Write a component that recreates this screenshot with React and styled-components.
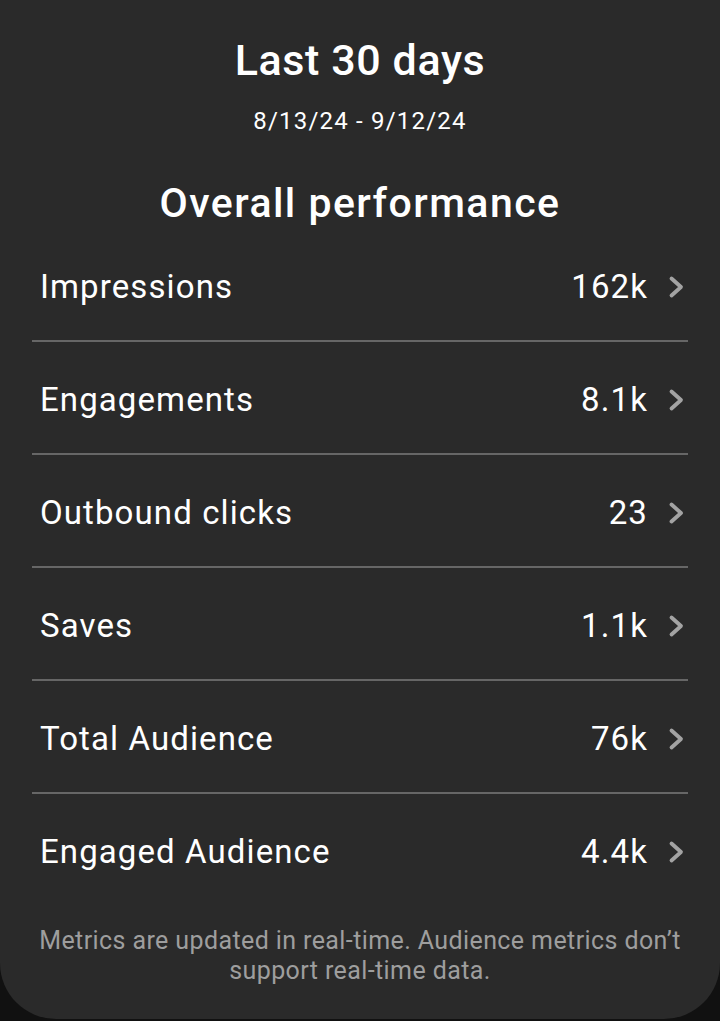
import React from "react";
import styled, { createGlobalStyle } from "styled-components";

const Global = createGlobalStyle`
  html, body { margin: 0; padding: 0; background: #111111; }
  body { font-family: Roboto, "Noto Sans", "Liberation Sans", sans-serif; -webkit-font-smoothing: antialiased; }
  * { box-sizing: border-box; }
`;

const Panel = styled.div`
  width: 720px;
  min-height: 1019px;
  background: #2a2a2a;
  border-radius: 0 0 56px 56px;
  padding: 35px 32px 30px;
  display: flex;
  flex-direction: column;
  color: #ffffff;
`;

const Title = styled.h1`
  margin: 0;
  font-size: 43px;
  line-height: 50px;
  font-weight: 500;
  letter-spacing: 0.6px;
  text-align: center;
`;

const DateRange = styled.div`
  margin-top: 21px;
  font-size: 24px;
  line-height: 30px;
  letter-spacing: 1.2px;
  text-align: center;
`;

const Heading = styled.h2`
  margin: 44px 0 0;
  font-size: 41px;
  line-height: 46px;
  font-weight: 500;
  letter-spacing: 1.45px;
  text-align: center;
`;

const List = styled.div`
  margin-top: 3px;
  display: flex;
  flex-direction: column;
`;

const Row = styled.div`
  display: flex;
  align-items: center;
  padding: 38px 3px 33px 8px;
  border-bottom: ${(p) => (p.$last ? "none" : "2px solid #666666")};
`;

const Label = styled.span`
  flex: 1;
  font-size: 33px;
  line-height: 40px;
  letter-spacing: 1.1px;
`;

const Value = styled.span`
  font-size: 33px;
  line-height: 40px;
  letter-spacing: 1.1px;
  margin-right: 20px;
`;

const Chevron = styled.svg`
  width: 17px;
  height: 24px;
  flex: none;
`;

const Footer = styled.p`
  margin: 21px 0 0;
  font-size: 25px;
  line-height: 30px;
  letter-spacing: 0.4px;
  color: #9e9e9e;
  text-align: center;
`;

const metrics = [
  ["Impressions", "162k"],
  ["Engagements", "8.1k"],
  ["Outbound clicks", "23"],
  ["Saves", "1.1k"],
  ["Total Audience", "76k"],
  ["Engaged Audience", "4.4k"],
];

export default function App() {
  return (
    <>
      <Global />
      <Panel>
        <Title>Last 30 days</Title>
        <DateRange>8/13/24 - 9/12/24</DateRange>
        <Heading>Overall performance</Heading>
        <List>
          {metrics.map(([label, value], i) => (
            <Row key={label} $last={i === metrics.length - 1}>
              <Label>{label}</Label>
              <Value>{value}</Value>
              <Chevron viewBox="0 0 17 24">
                <polyline
                  points="3.5,3.5 13,12 3.5,20.5"
                  fill="none"
                  stroke="#a3a3a3"
                  strokeWidth="3.8"
                  strokeLinecap="round"
                  strokeLinejoin="round"
                />
              </Chevron>
            </Row>
          ))}
        </List>
        <Footer>
          Metrics are updated in real-time. Audience metrics don’t
          <br />
          support real-time data.
        </Footer>
      </Panel>
    </>
  );
}
